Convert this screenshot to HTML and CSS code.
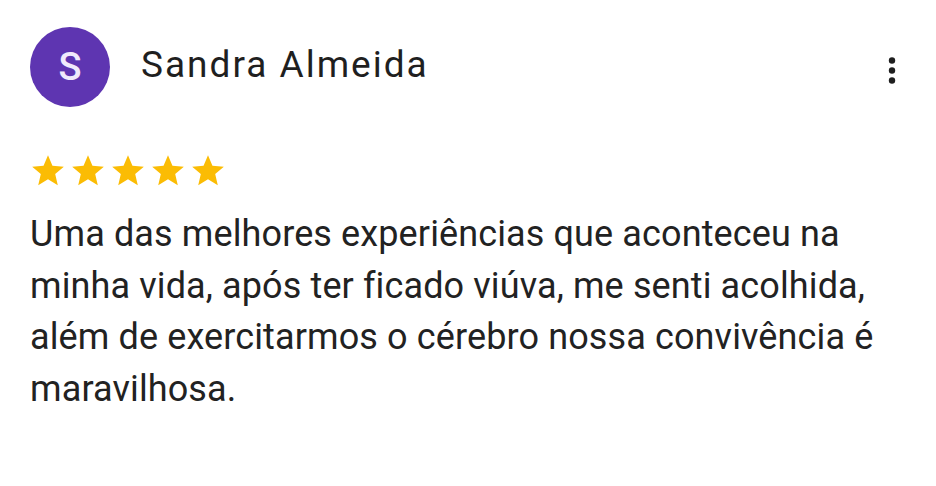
FILE: index.html
```html
<!DOCTYPE html>
<html lang="pt">
<head>
<meta charset="utf-8">
<link rel="stylesheet" href="styles.css">
</head>
<body>
<div class="review">
  <div class="header">
    <div class="avatar">S</div>
    <div class="name">Sandra Almeida</div>
    <div class="menu">
      <svg width="24" height="32" viewBox="0 0 24 32"><circle cx="12" cy="5.5" r="3.2" fill="#1f1f1f"/><circle cx="12" cy="15.5" r="3.2" fill="#1f1f1f"/><circle cx="12" cy="25.5" r="3.2" fill="#1f1f1f"/></svg>
    </div>
  </div>
  <div class="stars">
    <svg class="star" viewBox="0 0 24 24"><path d="M12 17.27L18.18 21l-1.64-7.03L22 9.24l-7.19-.61L12 2 9.19 8.63 2 9.24l5.46 4.73L5.82 21z"/></svg>
    <svg class="star" viewBox="0 0 24 24"><path d="M12 17.27L18.18 21l-1.64-7.03L22 9.24l-7.19-.61L12 2 9.19 8.63 2 9.24l5.46 4.73L5.82 21z"/></svg>
    <svg class="star" viewBox="0 0 24 24"><path d="M12 17.27L18.18 21l-1.64-7.03L22 9.24l-7.19-.61L12 2 9.19 8.63 2 9.24l5.46 4.73L5.82 21z"/></svg>
    <svg class="star" viewBox="0 0 24 24"><path d="M12 17.27L18.18 21l-1.64-7.03L22 9.24l-7.19-.61L12 2 9.19 8.63 2 9.24l5.46 4.73L5.82 21z"/></svg>
    <svg class="star" viewBox="0 0 24 24"><path d="M12 17.27L18.18 21l-1.64-7.03L22 9.24l-7.19-.61L12 2 9.19 8.63 2 9.24l5.46 4.73L5.82 21z"/></svg>
  </div>
  <p class="text">Uma das melhores experiências que aconteceu na minha vida, após ter ficado viúva, me senti acolhida, além de exercitarmos o cérebro nossa convivência é maravilhosa.</p>
</div>
</body>
</html>
```
FILE: styles.css
```css
html, body {
  margin: 0;
  padding: 0;
  background: #ffffff;
}
body {
  font-family: Roboto, "Noto Sans", Arial, sans-serif;
  color: #1f1f1f;
}
.review {
  padding: 27px 30px 0 30px;
  width: 876px;
}
.header {
  display: flex;
  align-items: center;
  height: 80px;
}
.avatar {
  width: 80px;
  height: 80px;
  border-radius: 50%;
  background: #5e35b1;
  color: #f1eafc;
  font-size: 38px;
  font-weight: 500;
  display: flex;
  align-items: center;
  justify-content: center;
  flex: none;
}
.name {
  margin-left: 31px;
  font-size: 37px;
  letter-spacing: 2px;
  flex: 1;
  line-height: 1;
  padding-bottom: 5px;
}
.menu {
  width: 24px;
  height: 32px;
  margin-right: 2px;
  margin-top: 8px;
}
.menu svg {
  display: block;
}
.stars {
  display: flex;
  gap: 2px;
  margin-top: 45px;
  margin-left: -1px;
}
.star {
  width: 38px;
  height: 38px;
  fill: #fbbc04;
  display: block;
}
.text {
  margin: 19px 0 0 0;
  font-size: 36px;
  letter-spacing: 0.12px;
  line-height: 51.5px;
  width: 870px;
  color: #222222;
}
```
